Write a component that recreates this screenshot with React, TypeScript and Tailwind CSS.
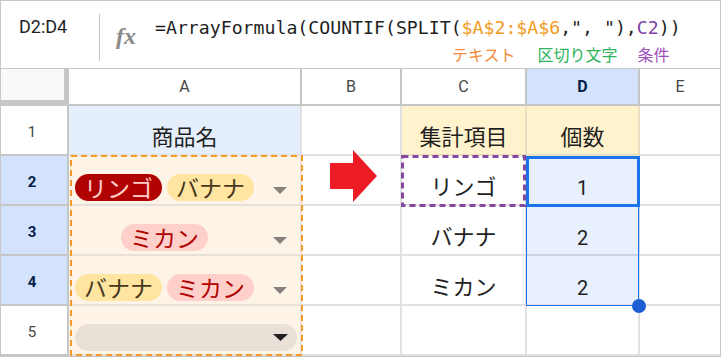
import React from "react";

const jp = "font-['Noto_Sans_CJK_JP','Noto_Sans',sans-serif]";
const ui = "font-[Roboto,'Liberation_Sans',sans-serif]";

const colHdr =
  "flex items-center justify-center border-r-2 border-b-2 border-[#c4c7c5] bg-white text-[16px] text-[#444746] font-[Roboto,'Liberation_Sans',sans-serif]";
const rowHdr =
  "flex items-center justify-center pt-[5px] pr-[4px] border-r-2 border-b-2 border-[#c4c7c5] text-[15px] font-[Roboto,'Liberation_Sans',sans-serif]";
const cell = "border-r-2 border-b-2 border-[#e1e1e1]";
const jpCell =
  "flex items-end justify-center pb-[6px] border-r-2 border-b-2 border-[#e1e1e1] text-[22px] leading-[26px] text-[#1f1f1f] font-['Noto_Sans_CJK_JP','Noto_Sans',sans-serif]";
const numCell =
  "flex items-end justify-center pb-[3px] border-r-2 border-b-2 text-[20px] leading-[26px] text-[#1f1f1f] font-[Roboto,'Liberation_Sans',sans-serif]";

function Chip({ label, cls }: { label: string; cls: string }) {
  return (
    <div
      className={`h-[27px] rounded-full px-[9px] text-[23px] leading-[27px] whitespace-nowrap font-['Noto_Sans_CJK_JP','Noto_Sans',sans-serif] ${cls}`}
    >
      {label}
    </div>
  );
}

function Caret({ color }: { color: string }) {
  return (
    <svg width="14" height="7" viewBox="0 0 14 7" className="shrink-0">
      <path d="M0 0H14L7 7Z" fill={color} />
    </svg>
  );
}

function ChipCell({ chips }: { chips: { label: string; cls: string }[] }) {
  return (
    <div className="flex items-end pb-[3px] bg-[#fef3e7] border-r-2 border-b-2 border-[#e7e1d9]">
      <div className="flex items-center">
        <div className="ml-[3px] w-[185px] flex justify-center gap-[5px]">
          {chips.map((c, i) => (
            <Chip key={i} label={c.label} cls={c.cls} />
          ))}
        </div>
        <div className="ml-[16px] mt-[5px]">
          <Caret color="#85817c" />
        </div>
      </div>
    </div>
  );
}

const RINGO = "bg-[#b10202] text-[#ffcfc9]";
const BANANA = "bg-[#ffe5a0] text-[#473821]";
const MIKAN = "bg-[#ffcfc9] text-[#b10202]";

export default function App() {
  return (
    <div className="relative w-[721px] h-[357px] border border-[#c7c7c7] bg-white overflow-hidden">
      {/* formula bar */}
      <div className="flex h-[68px] border-b border-[#c4c7c5]">
        <div
          className={`w-[98px] shrink-0 pl-[18px] pt-[15px] text-[18px] leading-[22px] text-[#1f1f1f] ${ui}`}
        >
          D2:D4
        </div>
        <div className="w-px shrink-0 h-[47px] mt-[13px] bg-[#c7c7c7]" />
        <div className="ml-[16px] mt-[21px] shrink-0 text-[24px] leading-[28px] italic font-bold text-[#8a8a8a] font-['Liberation_Serif',serif]">
          fx
        </div>
        <div className="ml-[19px] pt-[16px] flex flex-col shrink-0">
          <div className="text-[18.2px] leading-[22px] whitespace-pre text-[#1f1f1f] font-['DejaVu_Sans_Mono',monospace]">
            {"=ArrayFormula(COUNTIF(SPLIT("}
            <span className="text-[#f29b1e]">{"$A$2:$A$6"}</span>
            {',", "),'}
            <span className="text-[#7e3fa6]">{"C2"}</span>
            {"))"}
          </div>
          <div className={`mt-[5px] pl-[297px] flex text-[16px] leading-[20px] whitespace-nowrap ${jp}`}>
            <span className="text-[#f58a3a]">テキスト</span>
            <span className="ml-[22px] text-[#2eb35b]">区切り文字</span>
            <span className="ml-[20px] text-[#a052bd]">条件</span>
          </div>
        </div>
      </div>

      {/* grid */}
      <div className="grid grid-cols-[68px_233px_100px_125px_113px_80px] grid-rows-[37px_repeat(5,50px)]">
        {/* header row */}
        <div className="bg-[#f8f9fa] border-r-[5px] border-b-[6px] border-[#c4c7c5]" />
        <div className={colHdr}>A</div>
        <div className={colHdr}>B</div>
        <div className={colHdr}>C</div>
        <div className={`${colHdr} !bg-[#d3e3fd] font-bold !text-[#041e49]`}>D</div>
        <div className="flex items-center justify-center border-b-2 border-[#c4c7c5] bg-white text-[16px] text-[#444746] font-[Roboto,'Liberation_Sans',sans-serif]">
          E
        </div>

        {/* row 1 */}
        <div className={`${rowHdr} bg-white text-[#444746]`}>1</div>
        <div className={`${jpCell} bg-[#e5effb]`}>商品名</div>
        <div className={cell} />
        <div className={`${jpCell} bg-[#fff2cc] border-[#e9e0c4]`}>集計項目</div>
        <div className={`${jpCell} bg-[#fff2cc] border-[#e9e0c4]`}>個数</div>
        <div className="border-b-2 border-[#e1e1e1]" />

        {/* row 2 */}
        <div className={`${rowHdr} bg-[#d3e3fd] font-bold text-[#041e49]`}>2</div>
        <ChipCell
          chips={[
            { label: "リンゴ", cls: RINGO },
            { label: "バナナ", cls: BANANA },
          ]}
        />
        <div className={cell} />
        <div className={jpCell}>リンゴ</div>
        <div className={`${numCell} bg-[#e8f0fe] border-[#c9d5e6]`}>1</div>
        <div className="border-b-2 border-[#e1e1e1]" />

        {/* row 3 */}
        <div className={`${rowHdr} bg-[#d3e3fd] font-bold text-[#041e49]`}>3</div>
        <ChipCell chips={[{ label: "ミカン", cls: MIKAN }]} />
        <div className={cell} />
        <div className={jpCell}>バナナ</div>
        <div className={`${numCell} bg-[#e8f0fe] border-[#c9d5e6]`}>2</div>
        <div className="border-b-2 border-[#e1e1e1]" />

        {/* row 4 */}
        <div className={`${rowHdr} bg-[#d3e3fd] font-bold text-[#041e49]`}>4</div>
        <ChipCell
          chips={[
            { label: "バナナ", cls: BANANA },
            { label: "ミカン", cls: MIKAN },
          ]}
        />
        <div className={cell} />
        <div className={jpCell}>ミカン</div>
        <div className={`${numCell} bg-[#e8f0fe] border-[#e1e1e1]`}>2</div>
        <div className="border-b-2 border-[#e1e1e1]" />

        {/* row 5 */}
        <div className={`${rowHdr} bg-white text-[#444746]`}>5</div>
        <div className="flex items-end pb-[3px] pl-[6px] bg-[#fef3e7] border-r-2 border-b-2 border-[#e7e1d9]">
          <div className="w-[222px] h-[27px] rounded-full bg-[#e9e0d7] flex items-center justify-end pr-[9px]">
            <svg width="15" height="7" viewBox="0 0 15 7">
              <path d="M0 0H15L7.5 7Z" fill="#1f1f1f" />
            </svg>
          </div>
        </div>
        <div className={cell} />
        <div className={cell} />
        <div className={cell} />
        <div className="border-b-2 border-[#e1e1e1]" />
      </div>

      {/* red arrow */}
      <svg
        className="absolute left-[329px] top-[149px]"
        width="48"
        height="53"
        viewBox="0 0 48 53"
      >
        <polygon points="0,13 23,13 23,0 47,26 23,52 23,39 0,39" fill="#ec1c24" />
      </svg>

      {/* orange copy marquee around A2:A6 */}
      <svg
        className="absolute left-[68px] top-[153px]"
        width="236"
        height="204"
        viewBox="0 0 236 204"
      >
        <rect
          x="2"
          y="2"
          width="231"
          height="199"
          fill="none"
          stroke="#f39a2b"
          strokeWidth="2"
          strokeDasharray="6 4"
        />
      </svg>

      {/* purple marquee around C2 */}
      <svg
        className="absolute left-[399px] top-[153px]"
        width="128"
        height="56"
        viewBox="0 0 128 56"
      >
        <rect
          x="2.5"
          y="2.5"
          width="122"
          height="49"
          fill="none"
          stroke="#86479f"
          strokeWidth="3"
          strokeDasharray="6 4"
        />
      </svg>

      {/* selection range D2:D4 */}
      <div className="absolute left-[525px] top-[155px] w-[113px] h-[150px] border border-[#1a73e8]" />
      <div className="absolute left-[525px] top-[155px] w-[114px] h-[51px] border-[3px] border-[#1a73e8]" />
      <div className="absolute left-[631px] top-[298px] w-[14px] h-[14px] rounded-full bg-[#1b5fd3]" />
    </div>
  );
}
